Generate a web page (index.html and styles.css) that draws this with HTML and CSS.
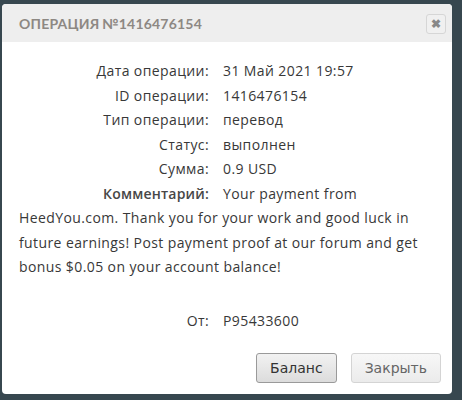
FILE: index.html
```html
<!DOCTYPE html>
<html lang="ru">
<head>
    <meta charset="UTF-8">
    <title>Операция №1416476154</title>
    <link rel="stylesheet" href="styles.css">
</head>
<body>
    <div class="dialog">
        <div class="dialog-header">
            <span class="dialog-title">Операция №1416476154</span>
            <button class="close-btn" type="button">&#10006;</button>
        </div>
        <div class="dialog-body">
            <div class="row"><span class="label">Дата операции:</span>31 Май 2021 19:57</div>
            <div class="row"><span class="label">ID операции:</span>1416476154</div>
            <div class="row"><span class="label">Тип операции:</span>перевод</div>
            <div class="row"><span class="label">Статус:</span>выполнен</div>
            <div class="row"><span class="label">Сумма:</span>0.9 USD</div>
            <div class="row comment"><span class="label strong">Комментарий:</span>Your payment from HeedYou.com. Thank you for your work and good luck in future earnings! Post payment proof at our forum and get bonus $0.05 on your account balance!</div>
            <div class="row"><span class="label">От:</span>P95433600</div>
        </div>
        <div class="dialog-footer">
            <button class="btn" type="button">Баланс</button>
            <button class="btn btn-light" type="button">Закрыть</button>
        </div>
    </div>
</body>
</html>
```

FILE: styles.css
```css
body {
    margin: 0;
    padding: 4px 10px 0 2px;
    background-color: #37474f;
    font-family: "Open Sans", Arial, sans-serif;
}
.dialog {
    width: 450px;
    background: #fff;
    border-radius: 4px;
    overflow: hidden;
}
.dialog-header {
    height: 38px;
    background: #eeeeee;
    display: flex;
    align-items: center;
    justify-content: space-between;
    padding: 0 6px 0 17px;
}
.dialog-title {
    text-transform: uppercase;
    color: #8d8883;
    font-family: Lato, "Open Sans", sans-serif;
    font-size: 14px;
    font-weight: 700;
    letter-spacing: 0.2px;
    word-spacing: -1px;
}
.close-btn {
    width: 20px;
    height: 20px;
    padding: 0;
    border: 1px solid #d6d6d6;
    border-radius: 3px;
    background: #f0f0f0;
    color: #888;
    font-size: 12px;
    font-weight: bold;
    line-height: 18px;
    margin-top: 1px;
}
.dialog-body {
    padding: 17px 15px 0 17px;
    font-size: 14px;
    line-height: 24.5px;
    letter-spacing: 0.4px;
    color: #383838;
}
.label {
    display: inline-block;
    width: 190px;
    margin-right: 14px;
    text-align: right;
}
.strong {
    font-weight: 600;
    letter-spacing: 0.2px;
    color: #474747;
}
.comment {
    margin-bottom: 29px;
}
.dialog-footer {
    display: flex;
    justify-content: flex-end;
    gap: 14px;
    padding: 20px 11px 11px 0;
}
.btn {
    height: 30px;
    padding: 0 13px;
    font-family: "DejaVu Sans", Verdana, sans-serif;
    font-size: 14px;
    color: #333;
    border: 1px solid #9a9a9a;
    border-radius: 3px;
    background: linear-gradient(#f2f2f2, #dcdcdc);
}
.btn-light {
    color: #666;
    border-color: #d4d4d4;
    background: linear-gradient(#f7f7f7, #ebebeb);
}
```
